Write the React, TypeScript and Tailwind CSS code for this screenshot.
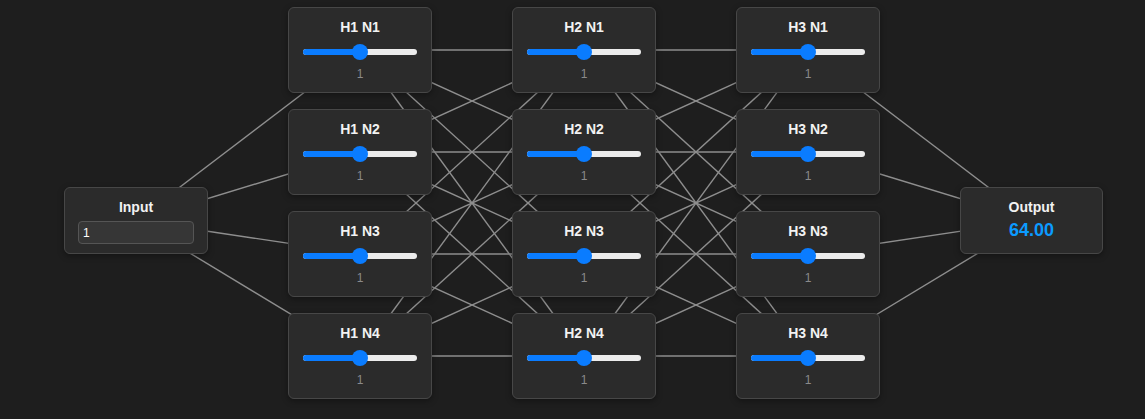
import React from 'react';

const layers = ['H1', 'H2', 'H3'];
const rows = ['N1', 'N2', 'N3', 'N4'];

// centers of the nodes on the canvas, used for the connection lines
const colX = [360, 584, 808];
const rowY = [50, 152, 254, 356];
const inputPt = { x: 136, y: 220.5 };
const outputPt = { x: 1032, y: 220.5 };

const Slider: React.FC<{ value: number }> = ({ value }) => {
  const pct = value * 100;
  return (
    <div className="relative mt-[7px] h-4 w-[114px] flex items-center">
      <div className="h-[6px] w-full rounded-full bg-[#ececec] overflow-hidden">
        <div className="h-full bg-[#0a7cff]" style={{ width: `${pct}%` }} />
      </div>
      <div
        className="absolute top-0 h-4 w-4 -ml-2 rounded-full bg-[#0a7cff]"
        style={{ left: `${pct}%` }}
      />
    </div>
  );
};

const HiddenNode: React.FC<{ label: string }> = ({ label }) => (
  <div className="w-[144px] h-[86px] rounded-md border border-[#474747] bg-[#2b2b2b] shadow-[0_2px_6px_rgba(0,0,0,0.35)] flex flex-col items-center pt-[9px]">
    <div className="text-sm leading-5 font-bold text-[#f2f2f2]">{label}</div>
    <Slider value={0.5} />
    <div className="mt-[6px] text-xs leading-4 text-[#8a8a8a]">1</div>
  </div>
);

const Connections: React.FC = () => {
  const lines: { x1: number; y1: number; x2: number; y2: number }[] = [];
  rowY.forEach(y => lines.push({ x1: inputPt.x, y1: inputPt.y, x2: colX[0], y2: y }));
  for (let c = 0; c < colX.length - 1; c++) {
    rowY.forEach(a => {
      rowY.forEach(b => lines.push({ x1: colX[c], y1: a, x2: colX[c + 1], y2: b }));
    });
  }
  rowY.forEach(y => lines.push({ x1: colX[2], y1: y, x2: outputPt.x, y2: outputPt.y }));

  return (
    <svg className="absolute inset-0 pointer-events-none" width={1145} height={419}>
      {lines.map((l, i) => (
        <line key={i} {...l} stroke="#8e8e8e" strokeWidth={1.4} />
      ))}
    </svg>
  );
};

export default function App() {
  return (
    <div
      className="relative w-full h-[419px] overflow-hidden bg-[#1e1e1e]"
      style={{ fontFamily: '"Liberation Sans", Arial, sans-serif' }}
    >
      <Connections />
      <div className="relative flex gap-[80px] pl-[64px] pt-[7px]">
        {/* input layer */}
        <div className="mt-[180px]">
          <div className="w-[144px] h-[67px] rounded-md border border-[#474747] bg-[#2b2b2b] shadow-[0_2px_6px_rgba(0,0,0,0.35)] flex flex-col items-center pt-[9px]">
            <div className="text-sm leading-5 font-bold text-[#f2f2f2]">Input</div>
            <input
              type="text"
              defaultValue="1"
              className="mt-[4px] w-[116px] h-[23px] rounded border border-[#555] bg-[#363636] px-1 text-xs text-white outline-none"
            />
          </div>
        </div>

        {/* hidden layers */}
        {layers.map(layer => (
          <div key={layer} className="flex flex-col gap-4">
            {rows.map(row => (
              <HiddenNode key={row} label={`${layer} ${row}`} />
            ))}
          </div>
        ))}

        {/* output layer */}
        <div className="mt-[180px]">
          <div className="w-[143px] h-[67px] rounded-md border border-[#474747] bg-[#2b2b2b] shadow-[0_2px_6px_rgba(0,0,0,0.35)] flex flex-col items-center pt-[9px]">
            <div className="text-sm leading-5 font-bold text-[#f2f2f2]">Output</div>
            <div className="mt-[1px] text-lg leading-6 font-bold text-[#0b9bff]">64.00</div>
          </div>
        </div>
      </div>
    </div>
  );
}
